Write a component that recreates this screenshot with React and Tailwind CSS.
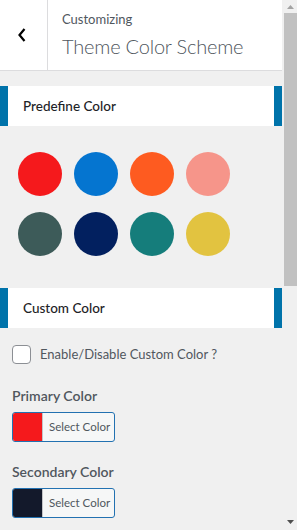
import React from "react";

const colors = [
  "#f5191c", "#0575d0", "#fe5b20", "#f6958a",
  "#3d5b59", "#02205f", "#157d7b", "#e2c340",
];

function SectionHeader({ title }) {
  return (
    <div className="flex h-[40px] bg-white">
      <div className="w-[8px] bg-[#0073aa]" />
      <div className="flex flex-1 items-center pl-[15px] text-[13.5px] font-medium text-[#1d2327]">{title}</div>
      <div className="w-[8px] bg-[#0073aa]" />
    </div>
  );
}

function ColorButton({ color }) {
  return (
    <div className="flex h-[30px] w-[103px] overflow-hidden rounded-[3px] border border-[#2271b1] bg-[#f6f7f7]">
      <div className="w-[30px] border-r border-[#c3c4c7]" style={{ backgroundColor: color }} />
      <div className="flex flex-1 items-center whitespace-nowrap pl-[6px] text-[11.5px] text-[#50575e]">Select Color</div>
    </div>
  );
}

export default function App() {
  return (
    <div className="flex h-[530px] w-[297px] overflow-hidden bg-[#f0f0f0]" style={{ fontFamily: 'Lato, "Noto Sans", sans-serif' }}>
      <div className="flex w-[282px] flex-col">
        <div className="flex h-[71px] border-b border-[#dcdcde] bg-white">
          <div className="flex w-[48px] items-center justify-center border-r border-[#dcdcde]">
            <svg width="10" height="16" viewBox="0 0 10 16" className="ml-[-4px]">
              <path d="M7.5 2 L2.5 8 L7.5 14" fill="none" stroke="#000" strokeWidth="2.2" />
            </svg>
          </div>
          <div className="flex flex-col pl-[14px] pt-[9px]">
            <div className="text-[13px] leading-[20px] text-[#50575e]">Customizing</div>
            <div className="mt-[4px] text-[20px] font-light leading-[26px] tracking-[-0.2px] text-[#50575e]">Theme Color Scheme</div>
          </div>
        </div>
        <div className="mt-[15px]">
          <SectionHeader title="Predefine Color" />
        </div>
        <div className="grid w-fit grid-cols-4 gap-x-[12px] gap-y-[16px] pl-[18px] pt-[26px]">
          {colors.map((c) => (
            <div key={c} className="h-[44px] w-[44px] rounded-full" style={{ backgroundColor: c }} />
          ))}
        </div>
        <div className="mt-[32px]">
          <SectionHeader title="Custom Color" />
        </div>
        <div className="flex items-center pl-[12px] pt-[17px]">
          <div className="h-[19px] w-[19px] rounded-[4px] border border-[#8c8f94] bg-white" />
          <div className="pl-[9px] text-[13px] text-[#50575e]">Enable/Disable Custom Color ?</div>
        </div>
        <div className="pl-[12px] pt-[21px] text-[14px] font-semibold leading-[20px] text-[#50575e]">Primary Color</div>
        <div className="pl-[12px] pt-[6px]">
          <ColorButton color="#f5191c" />
        </div>
        <div className="pl-[12px] pt-[20px] text-[14px] font-semibold leading-[20px] text-[#50575e]">Secondary Color</div>
        <div className="pl-[12px] pt-[6px]">
          <ColorButton color="#13192b" />
        </div>
      </div>
      <div className="relative flex w-[15px] flex-col bg-[#f0f0f0]">
        <div className="flex h-[13px] items-center justify-center pl-[2px]">
          <svg width="7" height="4" viewBox="0 0 7 4"><path d="M0 4 L3.5 0 L7 4 Z" fill="#a3a3a3" /></svg>
        </div>
        <div className="ml-[2px] h-[273px] bg-[#c1c1c1]" />
        <div className="flex-1" />
        <div className="flex h-[17px] items-center justify-center pl-[2px]">
          <svg width="7" height="4" viewBox="0 0 7 4"><path d="M0 0 L7 0 L3.5 4 Z" fill="#505050" /></svg>
        </div>
      </div>
    </div>
  );
}
